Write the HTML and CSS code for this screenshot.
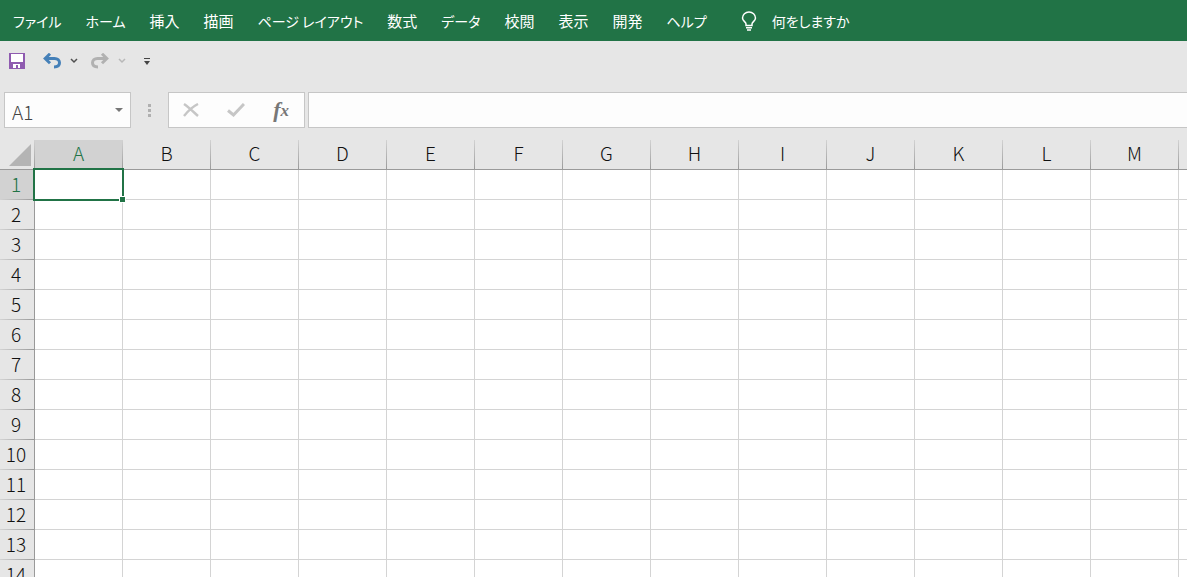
FILE: index.html
```html
<!DOCTYPE html>
<html lang="ja">
<head>
    <meta charset="UTF-8">
    <meta name="viewport" content="width=device-width, initial-scale=1.0">
    <title>Book1</title>
    <link rel="stylesheet" href="styles.css">
</head>
<body>
    <nav class="menu">
        <a href="#" class="kana">ファイル</a>
        <a href="#" class="kana">ホーム</a>
        <a href="#">挿入</a>
        <a href="#">描画</a>
        <a href="#" class="kana">ページ レイアウト</a>
        <a href="#">数式</a>
        <a href="#" class="kana">データ</a>
        <a href="#">校閲</a>
        <a href="#">表示</a>
        <a href="#">開発</a>
        <a href="#" class="kana">ヘルプ</a>
        <a href="#" class="kana tell-me">
            <svg width="16" height="20" viewBox="0 0 16 20" fill="none" stroke="#fff" stroke-width="1.5">
                <path d="M5 14.500V13C5 11 1.500 10 1.500 7a6.500 6 0 0 1 13 0C14.500 10 11 11 11 13v1.500z"/>
                <path d="M5 16.800h6M6 19h4"/>
            </svg>
            何をしますか
        </a>
    </nav>

    <div class="toolbar">
        <button class="save" aria-label="上書き保存">
            <svg width="16" height="16" viewBox="0 0 16 16">
                <path fill="#8f5bb0" d="M0 0h16v16H0z"/>
                <path fill="#fff" d="M2 1h12v8H2zM4 11h7v4H9v-3H7v3H4z"/>
            </svg>
        </button>
        <button class="undo" aria-label="元に戻す">
            <svg width="18" height="16" viewBox="0 0 18 16" fill="none" stroke="#4580b8" stroke-width="3">
                <path d="M2 5.5h9.5c3 0 5 1.800 5 4.300S14.500 14 11 14"/>
                <path d="M7 .8L2.200 5.500 7 10.200"/>
            </svg>
        </button>
        <button class="more" aria-label="元に戻す履歴">
            <svg width="8" height="6" viewBox="0 0 8 6" fill="none" stroke="#505050" stroke-width="1.5"><path d="M1 1l3 3 3-3"/></svg>
        </button>
        <button class="redo" aria-label="やり直し" disabled>
            <svg width="18" height="16" viewBox="0 0 18 16" fill="none" stroke="#b1b1b1" stroke-width="3">
                <path d="M16 5.500H6.500c-3 0-5 1.800-5 4.300S3.500 14 7 14"/>
                <path d="M11 .8l4.800 4.700-4.800 4.700"/>
            </svg>
        </button>
        <button class="more" aria-label="やり直し履歴" disabled>
            <svg width="8" height="6" viewBox="0 0 8 6" fill="none" stroke="#b8b8b8" stroke-width="1.5"><path d="M1 1l3 3 3-3"/></svg>
        </button>
        <button class="customize" aria-label="クイック アクセス ツール バーのカスタマイズ">
            <svg width="6" height="7" viewBox="0 0 6 7" fill="#444"><path d="M0 0h6v1H0zM0 3h6L3 7z"/></svg>
        </button>
    </div>

    <div class="formula-bar">
        <div class="name-box">
            <input type="text" value="A1" aria-label="名前ボックス">
            <button aria-label="名前の一覧">
                <svg width="8" height="4" viewBox="0 0 8 4" fill="#777"><path d="M0 0h8L4 4z"/></svg>
            </button>
        </div>
        <svg class="grip" width="3" height="13" viewBox="0 0 3 13" fill="#b0b0b0"><path d="M0 0h3v3H0zM0 5h3v3H0zM0 10h3v3H0z"/></svg>
        <div class="entry-buttons">
            <button aria-label="キャンセル">
                <svg width="16" height="14" viewBox="0 0 16 14" fill="none" stroke="#c6c6c6" stroke-width="2.400"><path d="M1 1c5 3.500 9 7.500 14 12M15 1C10 3.500 5 8 1 13"/></svg>
            </button>
            <button aria-label="入力">
                <svg width="18" height="14" viewBox="0 0 18 14" fill="none" stroke="#c6c6c6" stroke-width="3"><path d="M1 7.500l5.500 4.500L17 1"/></svg>
            </button>
            <button class="fx" aria-label="関数の挿入"><i>f</i><i class="x">x</i></button>
        </div>
        <input class="formula" type="text" aria-label="数式バー">
    </div>

    <div class="sheet">
        <table>
            <thead>
                <tr id="columns">
                    <th class="corner">
                        <svg width="22" height="22" viewBox="0 0 22 22"><path fill="#b4b4b4" d="M22 0v22H0z"/></svg>
                    </th>
                </tr>
            </thead>
            <tbody id="rows"></tbody>
        </table>
    </div>

    <script>
        const letters = 'ABCDEFGHIJKLM';
        const rowCount = 14;
        const columns = document.getElementById('columns');
        const rows = document.getElementById('rows');

        for (const letter of letters) {
            const th = document.createElement('th');
            th.scope = 'col';
            th.textContent = letter;
            columns.appendChild(th);
        }
        // last column takes the rest of the window
        columns.insertCell().className = 'rest';

        for (let i = 1; i <= rowCount; i++) {
            const tr = rows.insertRow();
            const th = document.createElement('th');
            th.scope = 'row';
            th.textContent = i;
            tr.appendChild(th);
            for (let j = 0; j <= letters.length; j++) {
                tr.insertCell();
            }
        }

        // A1 is the active cell
        columns.cells[1].className = 'active';
        rows.rows[0].cells[0].className = 'active';
        rows.rows[0].cells[1].className = 'selected';
    </script>
</body>
</html>
```

FILE: styles.css
```css
*,
*::before,
*::after {
    box-sizing: border-box;
}

body {
    margin: 0;
    height: 100vh;
    display: flex;
    flex-direction: column;
    overflow: hidden;
    background-color: #e6e6e6;
    font-family: "Noto Sans CJK JP", sans-serif;
}

button {
    display: flex;
    align-items: center;
    justify-content: center;
    padding: 0;
    border: none;
    background: none;
}

input {
    font: inherit;
    border: none;
    outline: none;
    background: none;
}

.menu {
    display: flex;
    align-items: center;
    gap: 24px;
    height: 41px;
    padding: 0 13px;
    background-color: #217346;
    font-size: 15px;
    font-feature-settings: "palt";
    white-space: nowrap;
}

.menu a {
    color: white;
    text-decoration: none;
}

.menu .kana {
    font-size: 14px;
}

.menu .tell-me {
    display: flex;
    align-items: center;
    gap: 15px;
    margin-left: 10px;
}

.toolbar {
    display: flex;
    align-items: center;
    height: 40px;
    padding: 0 9px;
}

.undo {
    margin-left: 18px;
}

.redo {
    margin-left: 13px;
}

.more {
    margin-left: 9px;
}

.customize {
    margin-left: 18px;
}

.formula-bar {
    display: flex;
    align-items: center;
    height: 36px;
    margin: 11px 0 12px 4px;
}

.name-box,
.entry-buttons,
.formula {
    display: flex;
    height: 36px;
    border: 1px solid #c6c6c6;
    background-color: #fdfdfd;
}

.name-box {
    width: 127px;
    font-size: 19px;
    font-weight: 300;
}

.name-box input {
    flex: 1;
    min-width: 0;
    padding: 2px 0 0 7px;
    color: #444;
}

.name-box button {
    width: 22px;
}

.grip {
    margin: 0 17px;
}

.entry-buttons {
    width: 137px;
    align-items: center;
    justify-content: space-between;
    padding: 0 15px 0 14px;
}

.fx {
    color: #777;
    font-family: "Liberation Serif", serif;
    font-size: 22px;
    font-weight: bold;
    line-height: 24px;
}

.fx .x {
    padding-top: 2px;
    font-size: 17px;
}

.formula {
    flex: 1;
    margin-left: 3px;
    border-right: none;
}

.sheet {
    flex: 1;
    min-height: 0;
    overflow: hidden;
}

table {
    border-collapse: separate;
    border-spacing: 0;
    table-layout: fixed;
    width: 100%;
    background-color: white;
}

th,
td {
    height: 30px;
    padding: 0;
    border-right: 1px solid #d4d4d4;
    border-bottom: 1px solid #d4d4d4;
}

th {
    width: 88px;
    background-color: #e6e6e6;
    color: #111;
    font-size: 19px;
    font-weight: 300;
    line-height: 26px;
}

thead th {
    padding-bottom: 3px;
    border-right: 1px solid;
    border-bottom: 1px solid #999;
    border-image: linear-gradient(#d4d4d4, #999) 1;
}

thead th.corner {
    width: 35px;
    padding: 0 3px 3px 0;
    text-align: right;
    line-height: 0;
    vertical-align: bottom;
}

thead .rest {
    border-right: none;
    border-bottom-color: #999;
    background-color: #e6e6e6;
}

tbody th {
    padding: 0 2px 2px 0;
    border-right: 1px solid;
    border-bottom: 1px solid;
    border-image: linear-gradient(to right, #d4d4d4, #999) 1;
}

tbody td:last-child {
    border-right: none;
}

th.active {
    background-color: #d2d2d2;
    color: #217346;
}

.selected {
    position: relative;
}

.selected::before {
    content: "";
    position: absolute;
    inset: -2px;
    border: 2px solid #217346;
}

.selected::after {
    content: "";
    position: absolute;
    right: -4px;
    bottom: -4px;
    width: 7px;
    height: 7px;
    border: 1px solid white;
    background-color: #217346;
}
```
